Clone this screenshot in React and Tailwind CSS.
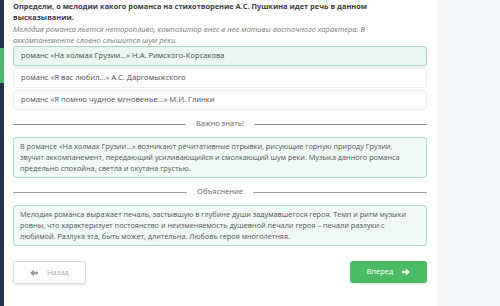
import React from 'react';

const options = [
    { text: 'романс «На холмах Грузии...» Н.А. Римского-Корсакова', selected: true },
    { text: 'романс «Я вас любил...» А.С. Даргомыжского', selected: false },
    { text: 'романс «Я помню чудное мгновенье...» М.И. Глинки', selected: false },
];

const Arrow = ({ color, flip }) => (
    <svg width="8" height="8" viewBox="0 0 10 10" fill={color} className={flip ? '-scale-x-100' : ''}>
        <path d="M0 3.5h5V0.5L10 5 5 9.5V6.5H0z" />
    </svg>
);

const Divider = ({ label }) => (
    <div className="flex items-center h-[12px]">
        <div className="flex-1 border-t border-[#999]" />
        <span className="px-[10px] text-[7.5px] text-[#666]">{label}</span>
        <div className="flex-1 border-t border-[#999]" />
    </div>
);

const InfoBox = ({ children }) => (
    <div className="bg-[#eff9f5] border border-[#b3dcc9] rounded-[3px] px-[6px] py-[3px] text-[7.3px] leading-[11px] text-[#555]">
        {children}
    </div>
);

const App = () => {
    return (
        <div className="w-[500px] h-[306px] flex bg-white overflow-hidden" style={{ fontFamily: '"Open Sans", sans-serif' }}>
            {/* left rail */}
            <div className="w-[4px] bg-[#243447] flex flex-col">
                <div className="h-[48px]" />
                <div className="h-[35px] bg-[#4cb870]" />
            </div>

            <div className="w-[434px] pl-[9px] pr-[11px] flex flex-col">
                <h1 className="mt-[1px] text-[7.4px] leading-[11px] font-bold text-[#3d3d3d]">
                    Определи, о мелодии какого романса на стихотворение А.С. Пушкина идет речь в данном<br />
                    высказывании.
                </h1>
                <p className="mt-[1px] text-[7.5px] leading-[11px] italic text-[#777]">
                    Мелодия романса льется неторопливо, композитор внес в нее мотивы восточного характера. В аккомпанементе словно слышится шум реки.
                </p>

                <div className="flex flex-col gap-[2px]">
                    {options.map((o) => (
                        <div
                            key={o.text}
                            className={
                                o.selected
                                    ? 'h-[20px] flex items-center px-[7px] rounded-[3px] border border-[#a9d8c3] bg-[#eaf7f1] text-[7.6px] text-[#4d4d4d] shadow-sm'
                                    : 'h-[20px] flex items-center px-[7px] rounded-[3px] border border-[#eeeeee] bg-white text-[7.6px] text-[#4d4d4d]'
                            }
                        >
                            {o.text}
                        </div>
                    ))}
                </div>

                <div className="mt-[8px]">
                    <Divider label="Важно знать!" />
                </div>
                <div className="mt-[7px]">
                    <InfoBox>
                        В романсе «На холмах Грузии...» возникают речитативные отрывки, рисующие горную природу Грузии,<br />
                        звучит аккомпанемент, передающий усиливающийся и смолкающий шум реки. Музыка данного романса предельно спокойна, светла и окутана грустью.
                    </InfoBox>
                </div>

                <div className="mt-[8px]">
                    <Divider label="Объяснение" />
                </div>
                <div className="mt-[7px]">
                    <InfoBox>
                        Мелодия романса выражает печаль, застывшую в глубине души задумавшегося героя. Темп и ритм музыки ровны, что характеризует постоянство и неизменяемость душевной печали героя – печали разлуки с любимой. Разлука эта, быть может, длительна. Любовь героя многолетняя.
                    </InfoBox>
                </div>

                <div className="mt-[15px] flex justify-between">
                    <button className="w-[73px] h-[23px] flex items-center justify-center gap-[9px] border border-[#dcdcdc] rounded-[3px] bg-white text-[7.5px] text-[#aaa] shadow-sm">
                        <Arrow color="#999" flip />
                        Назад
                    </button>
                    <button className="w-[77px] h-[22px] flex items-center justify-center gap-[9px] rounded-[3px] bg-[#4cbb64] text-[7.5px] text-white shadow-sm">
                        Вперед
                        <Arrow color="white" />
                    </button>
                </div>
            </div>

            <div className="flex-1 bg-[#f4f7fb]" />
        </div>
    );
};

export default App;
